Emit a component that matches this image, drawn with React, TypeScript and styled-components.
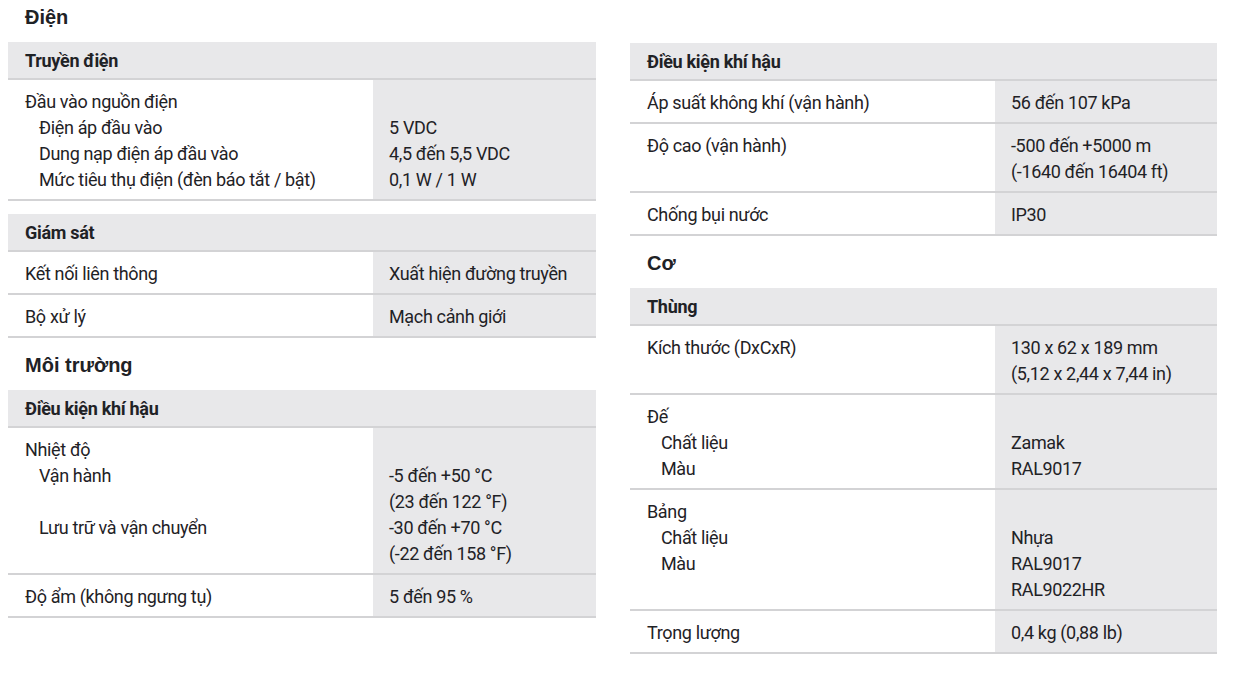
import styled, { createGlobalStyle } from "styled-components";

interface Row {
  label: string;
  sub?: string[];
  value: string[];
}

interface Table {
  title: string;
  rows: Row[];
}

interface Section {
  heading?: string;
  tables: Table[];
}

const leftColumn: Section[] = [
  {
    heading: "Điện",
    tables: [
      {
        title: "Truyền điện",
        rows: [
          {
            label: "Đầu vào nguồn điện",
            sub: [
              "Điện áp đầu vào",
              "Dung nạp điện áp đầu vào",
              "Mức tiêu thụ điện (đèn báo tắt / bật)",
            ],
            value: ["", "5 VDC", "4,5 đến 5,5 VDC", "0,1 W / 1 W"],
          },
        ],
      },
      {
        title: "Giám sát",
        rows: [
          { label: "Kết nối liên thông", value: ["Xuất hiện đường truyền"] },
          { label: "Bộ xử lý", value: ["Mạch cảnh giới"] },
        ],
      },
    ],
  },
  {
    heading: "Môi trường",
    tables: [
      {
        title: "Điều kiện khí hậu",
        rows: [
          {
            label: "Nhiệt độ",
            sub: ["Vận hành", "", "Lưu trữ và vận chuyển"],
            value: [
              "",
              "-5 đến +50 °C",
              "(23 đến 122 °F)",
              "-30 đến +70 °C",
              "(-22 đến 158 °F)",
            ],
          },
          { label: "Độ ẩm (không ngưng tụ)", value: ["5 đến 95 %"] },
        ],
      },
    ],
  },
];

const rightColumn: Section[] = [
  {
    tables: [
      {
        title: "Điều kiện khí hậu",
        rows: [
          { label: "Áp suất không khí (vận hành)", value: ["56 đến 107 kPa"] },
          {
            label: "Độ cao (vận hành)",
            value: ["-500 đến +5000 m", "(-1640 đến 16404 ft)"],
          },
          { label: "Chống bụi nước", value: ["IP30"] },
        ],
      },
    ],
  },
  {
    heading: "Cơ",
    tables: [
      {
        title: "Thùng",
        rows: [
          {
            label: "Kích thước (DxCxR)",
            value: ["130 x 62 x 189 mm", "(5,12 x 2,44 x 7,44 in)"],
          },
          {
            label: "Đế",
            sub: ["Chất liệu", "Màu"],
            value: ["", "Zamak", "RAL9017"],
          },
          {
            label: "Bảng",
            sub: ["Chất liệu", "Màu"],
            value: ["", "Nhựa", "RAL9017", "RAL9022HR"],
          },
          { label: "Trọng lượng", value: ["0,4 kg (0,88 lb)"] },
        ],
      },
    ],
  },
];

const GlobalStyle = createGlobalStyle`
  body {
    margin: 0;
    background: #ffffff;
    color: #1f2226;
    font-family: "Roboto", "Liberation Sans", sans-serif;
  }
`;

const Page = styled.div`
  display: grid;
  grid-template-columns: 588px 587px;
  column-gap: 34px;
  padding-left: 8px;
  width: 1236px;
  box-sizing: border-box;
`;

const Column = styled.div`
  display: flex;
  flex-direction: column;
`;

const Heading = styled.h2<{ $first?: boolean }>`
  margin: 0;
  padding: ${(p) => (p.$first ? "4px" : "14px")} 17px 12px;
  font-family: "Liberation Sans", "Roboto", sans-serif;
  font-size: 20px;
  font-weight: 700;
  line-height: 26px;
  color: #1f2226;
`;

const TableBlock = styled.div<{ $spaced?: boolean }>`
  margin-top: ${(p) => (p.$spaced ? "13px" : "0")};
  display: flex;
  flex-direction: column;
`;

const TableTitle = styled.div`
  background: #e8e8ea;
  border-bottom: 2px solid #d3d3d5;
  height: 36px;
  padding: 0 17px;
  display: flex;
  align-items: center;
  font-size: 18px;
  font-weight: 700;
  letter-spacing: -0.3px;
  line-height: 25px;
`;

const RowLine = styled.div`
  display: grid;
  grid-template-columns: 365px 1fr;
  border-bottom: 2px solid #d3d3d5;
  font-size: 18px;
  letter-spacing: -0.35px;
  line-height: 26px;
`;

const LabelCell = styled.div`
  padding: 9px 17px 6px;
`;

const ValueCell = styled.div`
  padding: 9px 16px 6px;
  background: #e8e8ea;
`;

const Line = styled.div<{ $indent?: boolean }>`
  padding-left: ${(p) => (p.$indent ? "14px" : "0")};
  min-height: 26px;
  white-space: nowrap;
`;

const SpecRow = ({ row }: { row: Row }) => (
  <RowLine>
    <LabelCell>
      <Line>{row.label}</Line>
      {row.sub?.map((s, i) => (
        <Line key={i} $indent>
          {s}
        </Line>
      ))}
    </LabelCell>
    <ValueCell>
      {row.value.map((v, i) => (
        <Line key={i}>{v}</Line>
      ))}
    </ValueCell>
  </RowLine>
);

const SpecColumn = ({ sections }: { sections: Section[] }) => (
  <Column>
    {sections.map((section, si) => (
      <div key={si}>
        {section.heading && (
          <Heading $first={si === 0}>{section.heading}</Heading>
        )}
        {section.tables.map((table, ti) => (
          <TableBlock key={table.title + ti} $spaced={ti > 0}>
            <TableTitle>{table.title}</TableTitle>
            {table.rows.map((row, ri) => (
              <SpecRow key={row.label + ri} row={row} />
            ))}
          </TableBlock>
        ))}
      </div>
    ))}
  </Column>
);

const App = () => {
  return (
    <>
      <GlobalStyle />
      <Page>
        <SpecColumn sections={leftColumn} />
        <Column>
          <Spacer />
          <SpecColumn sections={rightColumn} />
        </Column>
      </Page>
    </>
  );
};

export default App;

const Spacer = styled.div`
  height: 43px;
`;
